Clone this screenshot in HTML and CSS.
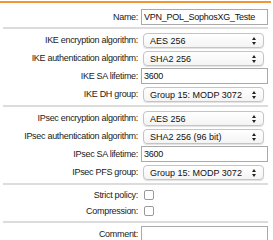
FILE: index.html
```html
<!DOCTYPE html>
<html lang="en">
<head>
    <meta charset="UTF-8">
    <title>IPsec Policy</title>
    <link rel="stylesheet" href="styles.css">
</head>
<body>
    <div class="topbar"></div>

    <div class="policy-form">
        <div class="row row-name">
            <label>Name:</label>
            <input type="text" class="text-field" value="VPN_POL_SophosXG_Teste">
        </div>

        <div class="divider"></div>

        <div class="row">
            <label>IKE encryption algorithm:</label>
            <div class="select-box">AES 256 <span class="arrows"></span></div>
        </div>
        <div class="row">
            <label>IKE authentication algorithm:</label>
            <div class="select-box">SHA2 256 <span class="arrows"></span></div>
        </div>
        <div class="row">
            <label>IKE SA lifetime:</label>
            <input type="text" class="text-field" value="3600">
        </div>
        <div class="row">
            <label>IKE DH group:</label>
            <div class="select-box">Group 15: MODP 3072 <span class="arrows"></span></div>
        </div>

        <div class="divider"></div>

        <div class="row">
            <label>IPsec encryption algorithm:</label>
            <div class="select-box">AES 256 <span class="arrows"></span></div>
        </div>
        <div class="row">
            <label>IPsec authentication algorithm:</label>
            <div class="select-box">SHA2 256 (96 bit) <span class="arrows"></span></div>
        </div>
        <div class="row">
            <label>IPsec SA lifetime:</label>
            <input type="text" class="text-field" value="3600">
        </div>
        <div class="row">
            <label>IPsec PFS group:</label>
            <div class="select-box">Group 15: MODP 3072 <span class="arrows"></span></div>
        </div>

        <div class="divider"></div>

        <div class="row row-check">
            <label>Strict policy:</label>
            <span class="check"></span>
        </div>
        <div class="row row-check">
            <label>Compression:</label>
            <span class="check"></span>
        </div>

        <div class="divider"></div>

        <div class="row row-name">
            <label>Comment:</label>
            <input type="text" class="text-field" value="">
        </div>
    </div>
</body>
</html>
```

FILE: styles.css
```css
* {
    margin: 0;
    padding: 0;
    box-sizing: border-box;
}

body {
    font-family: "Liberation Sans", Arial, sans-serif;
    font-size: 9px;
    color: #1a1a1a;
    background: white;
}

.topbar {
    height: 2px;
    margin-top: 1px;
    margin-right: 2px;
    background: #f39536;
}

.policy-form {
    padding: 5px 5px 0 3px;
}

.row {
    display: grid;
    grid-template-columns: 135px 1fr;
    column-gap: 3px;
    align-items: center;
    height: 18px;
}

.row-name {
    height: 17px;
}

.row-check {
    height: 16px;
}

.row label {
    text-align: right;
    white-space: nowrap;
    letter-spacing: -0.3px;
}

.text-field {
    height: 16px;
    width: 100%;
    border: 1px solid #a9a9a9;
    padding: 0 2px;
    font-family: "Liberation Sans", Arial, sans-serif;
    font-size: 9px;
    letter-spacing: -0.25px;
    color: #111;
    background: white;
}

.select-box {
    position: relative;
    height: 15px;
    margin: 0 4px 0 2px;
    padding: 0 0 0 6px;
    line-height: 14px;
    white-space: nowrap;
    border: 1px solid #c4c4c4;
    border-radius: 4px;
    box-shadow: 0 1px 1px rgba(0,0,0,0.12);
    background: linear-gradient(#ffffff, #f4f4f4);
    color: #111;
}

.arrows {
    position: absolute;
    right: 6px;
    top: 3px;
    width: 5px;
    height: 8px;
}

.arrows::before,
.arrows::after {
    content: "";
    position: absolute;
    left: 0;
    border-left: 2.5px solid transparent;
    border-right: 2.5px solid transparent;
}

.arrows::before {
    top: 0;
    border-bottom: 3px solid #222;
}

.arrows::after {
    bottom: 0;
    border-top: 3px solid #222;
}

.divider {
    height: 2px;
    margin: 2px 0;
    background: #dcdcdc;
}

.check {
    width: 10px;
    height: 10px;
    margin-left: 3px;
    border: 1px solid #9a9a9a;
    border-radius: 2px;
    background: white;
}
```
